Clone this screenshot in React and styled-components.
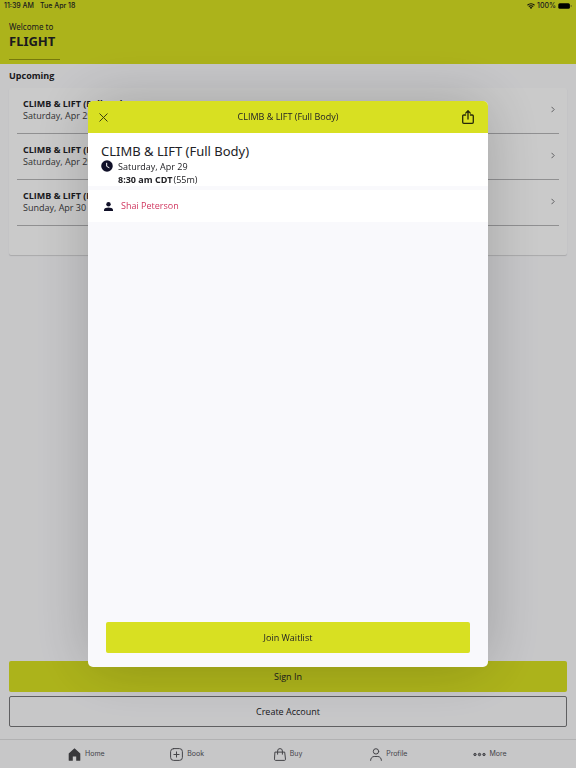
import React from 'react';
import styled, { createGlobalStyle } from 'styled-components';

const classes = [
  { id: 1, title: 'CLIMB & LIFT (Full Body)', date: 'Saturday, Apr 29' },
  { id: 2, title: 'CLIMB & LIFT (Full Body)', date: 'Saturday, Apr 29' },
  { id: 3, title: 'CLIMB & LIFT (Full Body)', date: 'Sunday, Apr 30' },
];

const HomeIcon = () => (
  <svg width="13" height="13" viewBox="0 0 13 13" fill="#46464a" aria-hidden="true">
    <path d="M6.5.3 12.3 5.6v6.6a.6.6 0 0 1-.6.6H8.2V8.6H4.8v4.2H1.3a.6.6 0 0 1-.6-.6V5.6z" />
  </svg>
);

const BookIcon = () => (
  <svg width="13" height="13" viewBox="0 0 13 13" fill="none" stroke="#55555a" strokeLinecap="round" aria-hidden="true">
    <rect x=".6" y=".6" width="11.8" height="11.8" rx="3" />
    <path d="M6.5 3.9v5.2M3.9 6.5h5.2" />
  </svg>
);

const BuyIcon = () => (
  <svg width="12" height="13" viewBox="0 0 12 13" fill="none" stroke="#55555a" strokeLinecap="round" strokeLinejoin="round" aria-hidden="true">
    <path d="M1.3 4.1h9.4l.8 7.2c0 .7-.4 1.1-1 1.1h-9c-.6 0-1-.4-1-1.1z" />
    <path d="M3.6 6.2V3a2.4 2.4 0 0 1 4.8 0v3.2" />
  </svg>
);

const ProfileIcon = () => (
  <svg width="12" height="13" viewBox="0 0 12 13" fill="none" stroke="#55555a" strokeLinecap="round" aria-hidden="true">
    <circle cx="6" cy="3.4" r="2.7" />
    <path d="M.6 12.4c0-2.2 1.5-3.9 3.6-3.9h3.6c2.1 0 3.6 1.7 3.6 3.9" />
  </svg>
);

const MoreIcon = () => (
  <svg width="13" height="5" viewBox="0 0 13 5" fill="#99999d" stroke="#55555a" aria-hidden="true">
    <circle cx="2" cy="2.5" r="1.2" />
    <circle cx="6.5" cy="2.5" r="1.2" />
    <circle cx="11" cy="2.5" r="1.2" />
  </svg>
);

const WifiIcon = () => (
  <svg width="8" height="6" viewBox="0 0 16 12" aria-hidden="true">
    <path d="M1 4.5a10 10 0 0 1 14 0M3.6 7.3a6.2 6.2 0 0 1 8.8 0" fill="none" stroke="#111" strokeWidth="2.2" />
    <path d="M8 12 5.2 9.2a4 4 0 0 1 5.6 0z" fill="#111" />
  </svg>
);

const BatteryIcon = () => (
  <svg width="14" height="6" viewBox="0 0 14 6" aria-hidden="true">
    <rect x=".3" y=".3" width="11.6" height="5.4" rx="1.5" fill="#000" />
    <path d="M12.8 2v2c.6-.2.8-.6.8-1s-.2-.8-.8-1z" fill="#333" />
  </svg>
);

const ChevronIcon = () => (
  <svg width="4" height="7" viewBox="0 0 4 7" fill="none" stroke="#77777a" aria-hidden="true">
    <path d="M.5.8 3.2 3.5.5 6.2" />
  </svg>
);

const CloseIcon = () => (
  <svg width="9" height="9" viewBox="0 0 9 9" fill="none" stroke="#3b3d10" strokeLinecap="round" aria-hidden="true">
    <path d="m.8.8 7.4 7.4M8.2.8.8 8.2" />
  </svg>
);

const ShareIcon = () => (
  <svg width="12" height="14" viewBox="0 0 12 14" fill="none" stroke="#25270a" strokeWidth="1.3" strokeLinecap="round" strokeLinejoin="round" aria-hidden="true">
    <path d="M3.6 5H1.8C1.1 5 .7 5.4.7 6.1v6.1c0 .7.4 1.1 1.1 1.1h8.4c.7 0 1.1-.4 1.1-1.1V6.1c0-.7-.4-1.1-1.1-1.1H8.4" />
    <path d="M6 9V.9M3.7 3.1 6 .8l2.3 2.3" />
  </svg>
);

const ClockIcon = () => (
  <svg width="12" height="12" viewBox="0 0 11 11" aria-hidden="true">
    <circle cx="5.5" cy="5.5" r="5.3" fill="#101028" />
    <path d="M5.2 2.6v3.2l2.5 1.4" fill="none" stroke="#fff" strokeWidth=".9" />
  </svg>
);

const PersonIcon = () => (
  <svg width="9" height="9" viewBox="0 0 9 9" fill="#101028" aria-hidden="true">
    <circle cx="4.5" cy="2.3" r="2.2" />
    <path d="M0 9V7.7c0-1.4 2.7-2.2 4.5-2.2S9 6.3 9 7.7V9z" />
  </svg>
);

const tabs = [
  { name: 'Home', Icon: HomeIcon },
  { name: 'Book', Icon: BookIcon },
  { name: 'Buy', Icon: BuyIcon },
  { name: 'Profile', Icon: ProfileIcon },
  { name: 'More', Icon: MoreIcon },
];

const ClassModal = () => (
  <Overlay>
    <Modal role="dialog" aria-modal="true" aria-labelledby="modal-title">
      <ModalBar>
        <IconButton aria-label="Close"><CloseIcon /></IconButton>
        <ModalTitle id="modal-title">CLIMB &amp; LIFT (Full Body)</ModalTitle>
        <IconButton aria-label="Share"><ShareIcon /></IconButton>
      </ModalBar>
      <Details>
        <ClassName>CLIMB &amp; LIFT (Full Body)</ClassName>
        <When>
          <ClockIcon />
          <div>
            <div>Saturday, Apr 29</div>
            <Time><strong>8:30 am CDT</strong>(55m)</Time>
          </div>
        </When>
      </Details>
      <Instructor>
        <PersonIcon />
        <InstructorLink href="#instructor">Shai Peterson</InstructorLink>
      </Instructor>
      <ModalFooter>
        <Button $primary>Join Waitlist</Button>
      </ModalFooter>
    </Modal>
  </Overlay>
);

const App = () => (
  <>
    <GlobalStyle />
    <Page>
      <Header>
        <StatusBar>
          <span>11:39 AM</span>
          <span>Tue Apr 18</span>
          <Battery>
            <WifiIcon />
            <span>100%</span>
            <BatteryIcon />
          </Battery>
        </StatusBar>
        <Welcome>Welcome to</Welcome>
        <Studio>FLIGHT</Studio>
        <HeaderLine />
      </Header>
      <Main>
        <SectionTitle>Upcoming</SectionTitle>
        <Card>
          {classes.map(({ id, title, date }) => (
            <ClassRow key={id} href={`#class-${id}`}>
              <div>
                <RowTitle>{title}</RowTitle>
                <RowDate>{date}</RowDate>
              </div>
              <ChevronIcon />
            </ClassRow>
          ))}
        </Card>
        <Actions>
          <Button $primary>Sign In</Button>
          <Button>Create Account</Button>
        </Actions>
      </Main>
      <TabBar>
        {tabs.map(({ name, Icon }) => (
          <Tab key={name} href={`#${name.toLowerCase()}`}>
            <Icon />
            {name}
          </Tab>
        ))}
      </TabBar>
    </Page>
    <ClassModal />
  </>
);

export default App;

const GlobalStyle = createGlobalStyle`
  * {
    box-sizing: border-box;
  }

  body {
    margin: 0;
    background: #f9f9fb;
    color: #222226;
    font-family: 'Open Sans', 'Noto Sans', sans-serif;
    font-size: 9px;
    line-height: 12px;
  }

  button {
    font: inherit;
    color: inherit;
    cursor: pointer;
  }

  svg {
    flex: none;
  }
`;

const Page = styled.div`
  display: flex;
  flex-direction: column;
  min-height: 100vh;
`;

const Header = styled.header`
  height: 64px;
  background: #d8e022;
`;

const StatusBar = styled.div`
  display: flex;
  align-items: center;
  gap: 6px;
  height: 12px;
  padding: 0 4px;
  font-family: Inter, sans-serif;
  font-size: 7px;
  font-weight: 500;
`;

const Battery = styled.div`
  display: flex;
  align-items: center;
  gap: 2px;
  margin-left: auto;
`;

const Welcome = styled.div`
  padding: 9px 9px 0;
  font-family: 'Noto Sans', sans-serif;
  font-size: 8px;
`;

const Studio = styled.h1`
  margin: 0;
  padding: 0 9px;
  font-family: 'Noto Sans', sans-serif;
  font-size: 13px;
  font-weight: 700;
  line-height: 16px;
`;

const HeaderLine = styled.div`
  width: 51px;
  margin: 10px 9px 0;
  border-top: 1px solid #94980f;
`;

const Main = styled.main`
  display: flex;
  flex-direction: column;
  flex: 1;
  padding: 6px 9px 12px;
`;

const SectionTitle = styled.h2`
  margin: 0 0 6px;
  font-size: 9px;
  font-weight: 700;
`;

const Card = styled.section`
  padding: 0 8px 29px;
  border-radius: 2px;
  background: #fdfdfd;
  box-shadow: 0 1px 1px rgba(0, 0, 0, 0.15);
`;

const ClassRow = styled.a`
  display: flex;
  align-items: center;
  justify-content: space-between;
  height: 46px;
  padding: 0 4px 2px 6px;
  border-bottom: 1px solid #b4b4b6;
  color: inherit;
  text-decoration: none;
`;

const RowTitle = styled.div`
  font-weight: 700;
`;

const RowDate = styled.div`
  color: #3c3c40;
`;

const Actions = styled.div`
  display: flex;
  flex-direction: column;
  gap: 4px;
  margin-top: auto;
`;

const Button = styled.button`
  width: 100%;
  height: 31px;
  padding: 0;
  border: ${({ $primary }) => ($primary ? 'none' : '1px solid #77777a')};
  border-radius: 2px;
  background: ${({ $primary }) => ($primary ? '#d8e022' : 'transparent')};
`;

const TabBar = styled.nav`
  display: flex;
  height: 29px;
  padding: 0 36px;
  border-top: 1px solid #dededf;
`;

const Tab = styled.a`
  display: flex;
  flex: 1;
  align-items: center;
  justify-content: center;
  gap: 4px;
  color: #55555a;
  font-family: Inter, sans-serif;
  font-size: 7px;
  text-decoration: none;
`;

const Overlay = styled.div`
  position: fixed;
  inset: 0;
  display: flex;
  align-items: center;
  justify-content: center;
  background: rgba(0, 0, 0, 0.2);
`;

const Modal = styled.div`
  display: flex;
  flex-direction: column;
  width: min(400px, 100% - 32px);
  height: min(566px, 100% - 32px);
  overflow: hidden;
  border-radius: 5px;
  background: #f9f9fc;
  box-shadow: 0 0 60px rgba(0, 0, 0, 0.2);
`;

const ModalBar = styled.div`
  display: flex;
  align-items: center;
  justify-content: space-between;
  height: 32px;
  padding: 0 10px 0 5px;
  background: #d8e022;
`;

const IconButton = styled.button`
  display: flex;
  align-items: center;
  justify-content: center;
  width: 20px;
  height: 20px;
  padding: 0;
  border: none;
  background: none;
`;

const ModalTitle = styled.div`
  flex: 1;
  padding-left: 5px;
  font-size: 9px;
  text-align: center;
`;

const Details = styled.div`
  padding: 9px 13px 0;
  background: #fff;
`;

const ClassName = styled.h2`
  margin: 0;
  font-family: 'Noto Sans', sans-serif;
  font-size: 13px;
  font-weight: 400;
  line-height: 18px;
`;

const When = styled.div`
  display: flex;
  gap: 5px;
  line-height: 13px;
`;

const Time = styled.div`
  display: flex;
  gap: 1px;
`;

const Instructor = styled.div`
  display: flex;
  align-items: center;
  gap: 8px;
  height: 32px;
  margin-top: 4px;
  padding: 0 16px;
  background: #fff;
`;

const InstructorLink = styled.a`
  color: #d0365f;
  text-decoration: none;
`;

const ModalFooter = styled.div`
  margin-top: auto;
  padding: 0 18px 14px;
`;
